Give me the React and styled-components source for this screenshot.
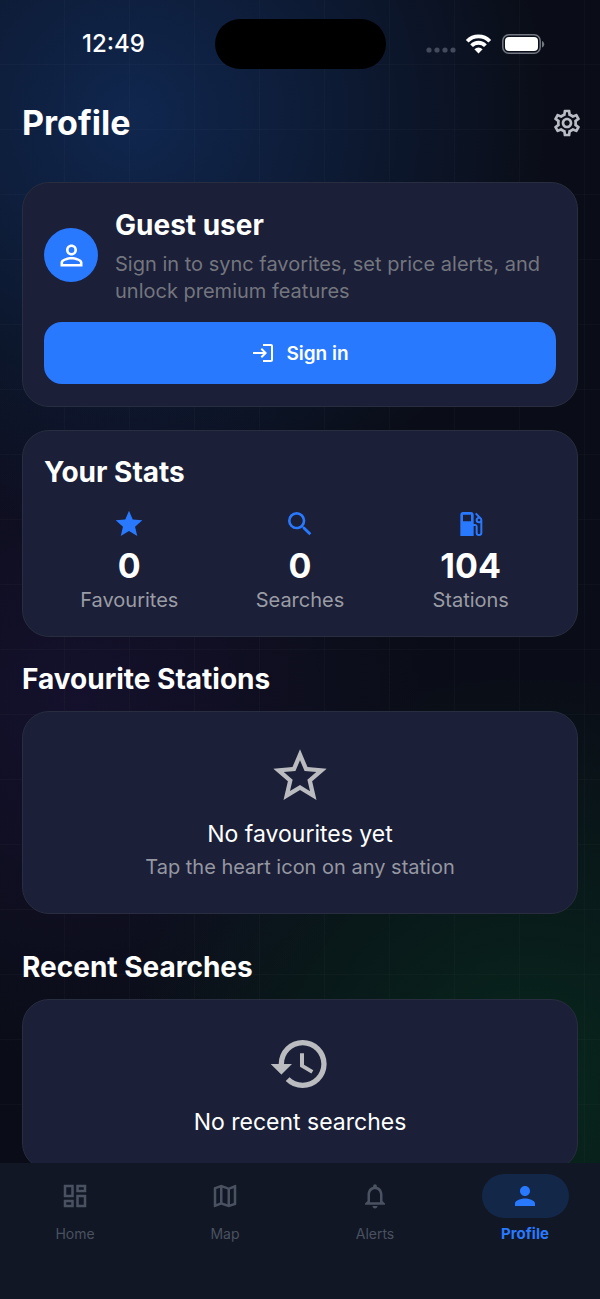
import React, { useState } from "react";
import styled, { createGlobalStyle } from "styled-components";
import {
    MdHistory,
    MdLocalGasStation,
    MdLogin,
    MdNotificationsNone,
    MdOutlineDashboard,
    MdOutlineMap,
    MdOutlineSettings,
    MdPerson,
    MdPersonOutline,
    MdSearch,
    MdStar,
    MdStarBorder
} from "react-icons/md";


const stats = [
    { label: "Favourites", value: 0, Icon: MdStar },
    { label: "Searches", value: 0, Icon: MdSearch },
    { label: "Stations", value: 104, Icon: MdLocalGasStation }
];

const tabs = [
    { label: "Home", Icon: MdOutlineDashboard },
    { label: "Map", Icon: MdOutlineMap },
    { label: "Alerts", Icon: MdNotificationsNone },
    { label: "Profile", Icon: MdPerson }
];

const StatusIcons = () => (
    <svg width="120" height="24" viewBox="0 0 120 24" aria-hidden="true">
        <g fill="#434a5b">
            <circle cx="4" cy="18" r="2.6" />
            <circle cx="12" cy="18" r="2.6" />
            <circle cx="20" cy="18" r="2.6" />
            <circle cx="28" cy="18" r="2.6" />
        </g>
        <g fill="none" stroke="#fff" strokeWidth="3.8">
            <path d="M42.2 9.2a15.6 15.6 0 0 1 22.6 0" />
            <path d="M46.6 13.7a9.5 9.5 0 0 1 13.8 0" />
        </g>
        <path d="M49.4 17.2a6 6 0 0 1 8.2 0l-4.1 4.4z" fill="#fff" />
        <rect x="77.8" y="2.8" width="37.4" height="18.4" rx="6" fill="none" stroke="#737781" strokeWidth="1.5" />
        <rect x="80" y="5" width="33" height="14" rx="4" fill="#fff" />
        <path d="M117 9v6.400c1.400-.5 2.200-1.700 2.200-3.200S118.400 9.500 117 9z" fill="#737781" />
    </svg>
);

const App = () => {
    const [active, setActive] = useState("Profile");

    return (
        <StyledScreen>
            <GlobalStyle />
            <StyledStatusBar>
                <StyledTime>12:49</StyledTime>
                <StyledIsland />
                <StyledSignals>
                    <StatusIcons />
                </StyledSignals>
            </StyledStatusBar>

            <StyledHeader>
                <h1>Profile</h1>
                <button type="button" aria-label="Settings">
                    <MdOutlineSettings size={32} />
                </button>
            </StyledHeader>

            <StyledMain>
                <StyledCard>
                    <StyledUser>
                        <StyledAvatar>
                            <MdPersonOutline size={33} />
                        </StyledAvatar>
                        <div>
                            <h2>Guest user</h2>
                            <p>Sign in to sync favorites, set price alerts, and unlock premium features</p>
                        </div>
                    </StyledUser>
                    <StyledSignIn type="button">
                        <MdLogin size={24} />
                        Sign in
                    </StyledSignIn>
                </StyledCard>

                <StyledCard>
                    <StyledCardTitle>Your Stats</StyledCardTitle>
                    <StyledStats>
                        {stats.map(({ label, value, Icon }) => (
                            <StyledStat key={label}>
                                <Icon size={32} />
                                <strong>{value}</strong>
                                <span>{label}</span>
                            </StyledStat>
                        ))}
                    </StyledStats>
                </StyledCard>

                <section>
                    <StyledSectionTitle>Favourite Stations</StyledSectionTitle>
                    <StyledEmptyCard>
                        <MdStarBorder size={64} />
                        <h3>No favourites yet</h3>
                        <p>Tap the heart icon on any station</p>
                    </StyledEmptyCard>
                </section>

                <section>
                    <StyledSectionTitle $spaced>Recent Searches</StyledSectionTitle>
                    <StyledEmptyCard>
                        <MdHistory size={64} />
                        <h3>No recent searches</h3>
                    </StyledEmptyCard>
                </section>
            </StyledMain>

            <StyledNav>
                {tabs.map(({ label, Icon }) => (
                    <StyledTab
                        key={label}
                        type="button"
                        $active={active === label}
                        onClick={() => setActive(label)}
                    >
                        <StyledPill $active={active === label}>
                            <Icon size={30} />
                        </StyledPill>
                        {label}
                    </StyledTab>
                ))}
            </StyledNav>
        </StyledScreen>
    )
}
export default App

const GlobalStyle = createGlobalStyle`
  * {
    box-sizing: border-box;
  }
  body {
    margin: 0;
    background: #0a0d17;
  }
  h1, h2, h3, p {
    margin: 0;
  }
  button {
    font-family: inherit;
    border: 0;
    padding: 0;
    cursor: pointer;
  }
`;

const StyledScreen = styled.div`
  height: 100vh;
  display: flex;
  flex-direction: column;
  overflow: hidden;
  color: #ffffff;
  font-family: Inter, "Liberation Sans", sans-serif;
  background-color: #0a0d17;
  background-image:
    linear-gradient(90deg, transparent 64px, rgba(255, 255, 255, 0.02) 64px),
    linear-gradient(transparent 64px, rgba(255, 255, 255, 0.02) 64px),
    radial-gradient(circle at 22% 9%, rgba(20, 56, 116, 0.6), transparent 420px),
    radial-gradient(circle at 88% 84%, rgba(6, 56, 32, 0.6), transparent 420px),
    radial-gradient(circle at 12% 54%, rgba(36, 22, 76, 0.4), transparent 360px);
  background-size: 65px 65px, 65px 65px, auto, auto, auto;
`;

const StyledStatusBar = styled.div`
  display: grid;
  grid-template-columns: 1fr auto 1fr;
  align-items: center;
  padding: 19px 55px 0;
`;

const StyledTime = styled.span`
  padding-left: 27px;
  font-size: 24px;
  line-height: 30px;
  font-weight: 500;
`;

const StyledIsland = styled.div`
  width: 171px;
  height: 50px;
  border-radius: 25px;
  background: #000000;
`;

const StyledSignals = styled.div`
  display: flex;
  justify-content: flex-end;
`;

const StyledHeader = styled.header`
  display: flex;
  align-items: center;
  justify-content: space-between;
  padding: 32px 17px 37px 22px;
  h1 {
    font-size: 34px;
    line-height: 44px;
    font-weight: 700;
  }
  button {
    display: flex;
    color: #b9bcc4;
    background: none;
  }
`;

const StyledMain = styled.main`
  flex: 1;
  min-height: 0;
  overflow-y: auto;
  scrollbar-width: none;
  padding: 0 22px;
`;

const StyledCard = styled.section`
  margin-bottom: 23px;
  padding: 22px 21px;
  border: 1px solid #282d3f;
  border-radius: 27px;
  background: #1b1f37;
`;

const StyledUser = styled.div`
  display: flex;
  align-items: center;
  gap: 17px;
  margin-bottom: 17px;
  h2 {
    margin-bottom: 6px;
    font-size: 28px;
    line-height: 40px;
    font-weight: 700;
  }
  p {
    font-size: 20px;
    line-height: 27px;
    color: #74767f;
  }
`;

const StyledAvatar = styled.div`
  flex: none;
  display: flex;
  align-items: center;
  justify-content: center;
  width: 54px;
  height: 54px;
  border-radius: 50%;
  background: #2979ff;
`;

const StyledSignIn = styled.button`
  display: flex;
  align-items: center;
  justify-content: center;
  gap: 11px;
  width: 100%;
  height: 62px;
  border-radius: 18px;
  font-size: 19px;
  font-weight: 600;
  color: #ffffff;
  background: #2979ff;
`;

const StyledCardTitle = styled.h2`
  margin-bottom: 17px;
  font-size: 28px;
  line-height: 38px;
  font-weight: 700;
`;

const StyledStats = styled.div`
  display: grid;
  grid-template-columns: repeat(3, 1fr);
`;

const StyledStat = styled.div`
  display: flex;
  flex-direction: column;
  align-items: center;
  color: #2979ff;
  strong {
    margin-top: 5px;
    font-size: 34px;
    line-height: 42px;
    font-weight: 700;
    color: #ffffff;
  }
  span {
    font-size: 20px;
    line-height: 27px;
    color: #9a9ca5;
  }
`;

const StyledSectionTitle = styled.h2`
  padding: ${({ $spaced }) => ($spaced ? "34px" : "0")} 0 13px;
  font-size: 28px;
  line-height: 38px;
  font-weight: 700;
`;

const StyledEmptyCard = styled.div`
  display: flex;
  flex-direction: column;
  align-items: center;
  padding: 32px 21px;
  border: 1px solid #282d3f;
  border-radius: 27px;
  color: #babcc0;
  background: #1b1f37;
  h3 {
    margin-top: 11px;
    font-size: 23px;
    line-height: 30px;
    font-weight: 400;
    color: #ffffff;
  }
  p {
    margin-top: 5px;
    font-size: 20px;
    line-height: 27px;
    color: #9597a2;
  }
`;

const StyledNav = styled.nav`
  display: grid;
  grid-template-columns: repeat(4, 1fr);
  padding: 11px 0 55px;
  background: #111724;
`;

const StyledTab = styled.button`
  display: flex;
  flex-direction: column;
  align-items: center;
  gap: 6px;
  font-size: ${({ $active }) => ($active ? "15px" : "14px")};
  line-height: 20px;
  font-weight: ${({ $active }) => ($active ? 700 : 400)};
  color: ${({ $active }) => ($active ? "#2979ff" : "#4a5160")};
  background: none;
`;

const StyledPill = styled.span`
  display: flex;
  align-items: center;
  justify-content: center;
  width: 87px;
  height: 44px;
  border-radius: 22px;
  background: ${({ $active }) => ($active ? "#132748" : "transparent")};
`;
